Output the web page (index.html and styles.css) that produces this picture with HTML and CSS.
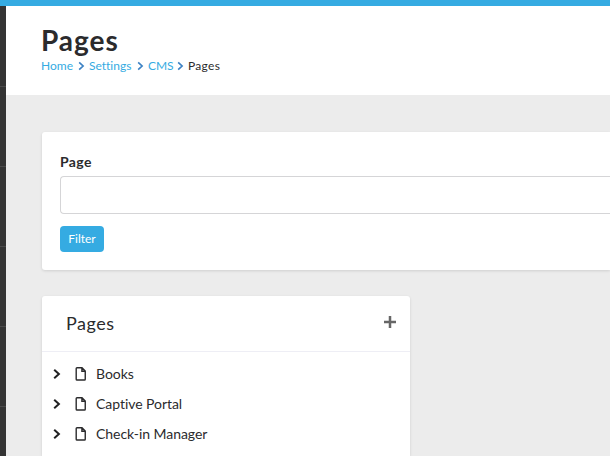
FILE: index.html
```html
<!DOCTYPE html>
<html lang="en">
<head>
<meta charset="utf-8">
<title>Pages</title>
<link rel="stylesheet" href="styles.css">
</head>
<body>
<svg class="defs" aria-hidden="true">
  <symbol id="chevron" viewBox="0 0 8 12"><path d="M1.2 1.7 5.9 6 1.2 10.3" fill="none" stroke="currentColor" stroke-width="2"/></symbol>
  <symbol id="file" viewBox="0 0 12 16"><path d="M2 1.75h5l3.25 3.25v8.2c0 .5-.3.8-.8.8H2c-.5 0-.8-.3-.8-.8V2.55c0-.5.3-.8.8-.8ZM6.9 2v3.3h3.3" fill="none" stroke="currentColor" stroke-width="1.4"/></symbol>
</svg>
<div class="topbar"></div>
<div class="layout">
  <nav class="rail"></nav>
  <main class="main">
    <header class="header">
      <h1 class="title">Pages</h1>
      <div class="crumbs">
        <a class="home">Home</a><svg><use href="#chevron"/></svg><a class="settings">Settings</a><svg><use href="#chevron"/></svg><a class="cms">CMS</a><svg><use href="#chevron"/></svg><span>Pages</span>
      </div>
    </header>
    <div class="content">
      <section class="card filter">
        <label class="label" for="page">Page</label>
        <input class="field" id="page" type="text">
        <button class="button">Filter</button>
      </section>
      <section class="card tree">
        <div class="tree-head">
          <h2>Pages</h2>
          <svg class="plus" viewBox="0 0 12 12"><path d="M6 0v12M0 6h12" stroke="currentColor" stroke-width="2.5"/></svg>
        </div>
        <ul>
          <li><svg class="chev"><use href="#chevron"/></svg><svg class="file"><use href="#file"/></svg><span>Books</span></li>
          <li><svg class="chev"><use href="#chevron"/></svg><svg class="file"><use href="#file"/></svg><span>Captive Portal</span></li>
          <li><svg class="chev"><use href="#chevron"/></svg><svg class="file"><use href="#file"/></svg><span>Check-in Manager</span></li>
        </ul>
      </section>
    </div>
  </main>
</div>
</body>
</html>
```
FILE: styles.css
```css
* { box-sizing: border-box; }
body { margin: 0; height: 456px; overflow: hidden; background: #ececec; color: #2b2b2d; font-family: Lato, "Liberation Sans", sans-serif; font-variant-ligatures: none; }
.defs { display: none; }
.topbar { height: 6px; background: #35abe2; }
.layout { display: flex; height: 450px; }
.rail { width: 6px; flex: none; background: repeating-linear-gradient(#343434 0 79px, #4b4b4b 79px 80px) 0 1px; }
.main { display: flex; flex-direction: column; flex: 1; min-width: 0; }
.header { flex: none; height: 89px; padding: 17px 0 0 35px; background: #fff; }
.title { margin: 0; font-size: 28px; line-height: 35px; font-weight: 700; letter-spacing: .95px; }
.crumbs { display: flex; align-items: center; height: 16px; font-size: 12px; line-height: 16px; white-space: nowrap; }
.crumbs a { color: #35abe2; }
.crumbs span { letter-spacing: .3px; }
.crumbs svg { width: 7px; height: 10px; margin-right: 4px; color: #3d82c4; }
.home { width: 37px; }
.settings { width: 48px; }
.crumbs .cms { width: 29px; letter-spacing: -.1px; }
.content { display: flex; flex-direction: column; flex: 1; padding: 37px 0 0 36px; }
.card { background: #fff; border-radius: 3px; box-shadow: 0 1px 3px rgba(0, 0, 0, .12); }
.filter { height: 138px; padding: 20px 0 0 18px; border-radius: 3px 0 0 3px; }
.label { display: block; height: 24px; font-size: 14px; line-height: 20px; font-weight: 700; letter-spacing: .4px; }
.field { display: block; width: 100%; height: 38px; border: 1px solid #d5d5d7; border-right: 0; border-radius: 4px 0 0 4px; background: #fff; }
.button { display: block; width: 44px; height: 26px; margin-top: 12px; padding: 0; border: 0; border-radius: 4px; background: #35abe2; color: #fff; font: 12px/26px Lato, sans-serif; }
.tree { flex: 1; width: 368px; margin-top: 26px; border-radius: 3px 3px 0 0; }
.tree-head { display: flex; justify-content: space-between; height: 56px; padding: 15px 14px 0 24px; border-bottom: 1px solid #eeeef5; }
.tree-head h2 { margin: 0; font-size: 18px; line-height: 24px; font-weight: 400; letter-spacing: .5px; }
.plus { width: 12px; height: 12px; margin-top: 5px; color: #666; }
ul { margin: 0; padding: 7px 0 0 11px; list-style: none; }
li { display: flex; align-items: center; height: 30px; font-size: 14px; line-height: 20px; letter-spacing: -.05px; }
.chev { width: 8px; height: 12px; margin-right: 14px; color: #202022; }
.file { width: 12px; height: 16px; margin-right: 9px; }
```
